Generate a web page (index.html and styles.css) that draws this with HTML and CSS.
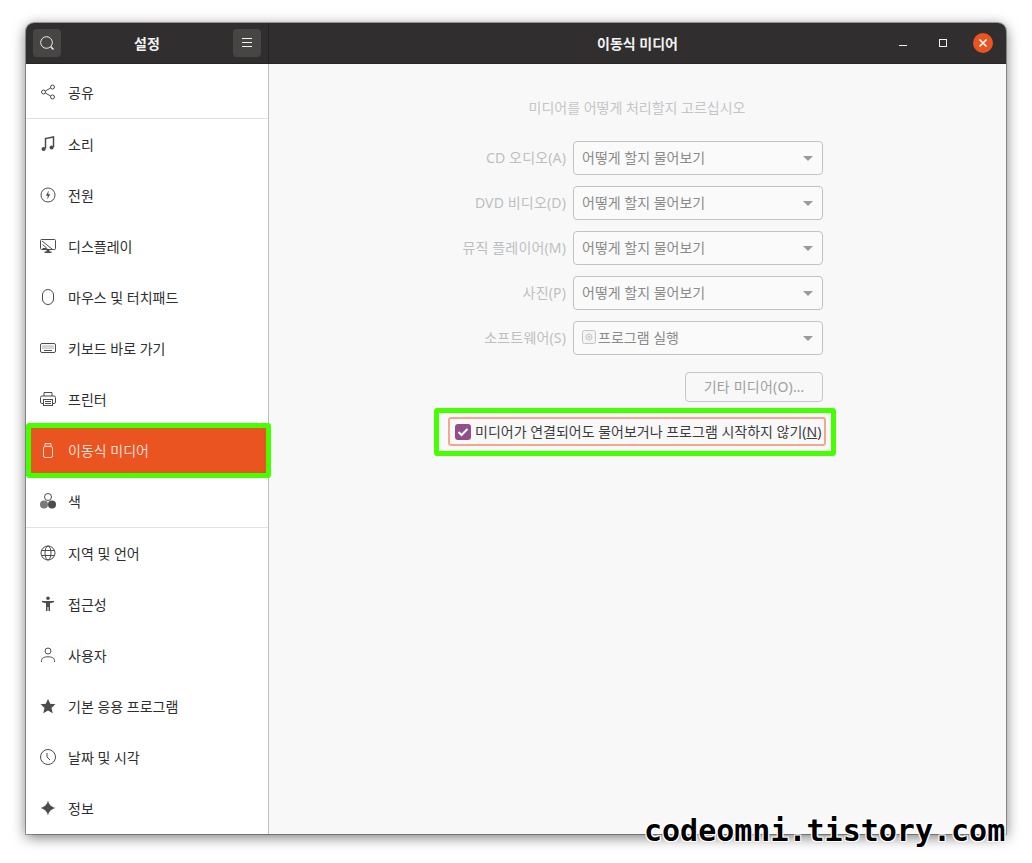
FILE: index.html
```html
<!DOCTYPE html>
<html lang="ko">
<head>
<meta charset="utf-8">
<title>설정</title>
<link rel="stylesheet" href="styles.css">
</head>
<body>
<div class="window">
  <header class="titlebar">
    <div class="titlebar-left">
      <button class="hbtn" aria-label="검색"><svg width="16" height="16" viewBox="0 0 16 16" class="hicon"><circle cx="7.500" cy="7.500" r="5.800"/><path d="M11.800 11.800l2.700 2.700" stroke-width="1.600"/></svg></button>
      <span class="title">설정</span>
      <button class="hbtn" aria-label="메뉴"><svg width="16" height="16" viewBox="0 0 16 16" class="hicon"><path d="M3 3.500h10M3 7.500h10M3 11.500h10"/></svg></button>
    </div>
    <div class="titlebar-right">
      <span class="title main-title">이동식 미디어</span>
      <div class="controls">
        <svg width="10" height="10" viewBox="0 0 10 10" class="hicon ctl-min"><path d="M1 7.500h8"/></svg>
        <svg width="10" height="10" viewBox="0 0 10 10" class="hicon"><rect x="1.500" y="1.500" width="7" height="7"/></svg>
        <span class="close"><svg width="10" height="10" viewBox="0 0 10 10" class="xicon"><path d="M1.500 1.500l7 7M8.500 1.500l-7 7"/></svg></span>
      </div>
    </div>
  </header>
  <div class="body">
    <nav class="sidebar">
      <a class="row sep"><svg class="ic" viewBox="0 0 16 16"><circle cx="3.500" cy="8" r="2"/><circle cx="12.500" cy="3" r="2"/><circle cx="12.500" cy="13" r="2"/><path d="M5.300 7l5.400-3M5.300 9l5.400 3"/></svg><span>공유</span></a>
      <a class="row"><svg class="ic" viewBox="0 0 16 16"><path d="M5.500 12.500V2.500l8-1.500v10" stroke-width="1.500"/><circle class="fill" cx="3.600" cy="13" r="2.100"/><circle class="fill" cx="11.600" cy="11.500" r="2.100"/></svg><span>소리</span></a>
      <a class="row"><svg class="ic" viewBox="0 0 16 16"><circle cx="8" cy="8" r="7"/><path class="fill" d="M8.800 3.500L5.800 8.700h2l-.6 3.800 3-5.200h-2z"/></svg><span>전원</span></a>
      <a class="row"><svg class="ic" viewBox="0 0 16 16"><rect x="0.500" y="1.500" width="15" height="10" rx="1"/><path d="M2 3l10 8M2.500 6.500l5 4.500M2.500 10.500h4"/><path class="fill" d="M6.500 12h3v1.500h2V15h-7v-1.500h2z"/></svg><span>디스플레이</span></a>
      <a class="row"><svg class="ic" viewBox="0 0 16 16"><rect x="2.500" y="0.500" width="11" height="15" rx="5.500"/></svg><span>마우스 및 터치패드</span></a>
      <a class="row"><svg class="ic" viewBox="0 0 16 16"><rect x="0.500" y="3.500" width="15" height="9" rx="1.500"/><path d="M2.500 6h11M2.500 8h11" stroke-dasharray="1 1"/><path d="M4 10.500h8"/></svg><span>키보드 바로 가기</span></a>
      <a class="row"><svg class="ic" viewBox="0 0 16 16"><path d="M4 5V1.500h8V5"/><path d="M3.500 12.500H2A1.500 1.500 0 0 1 .5 11V6.500A1.500 1.500 0 0 1 2 5h12a1.500 1.500 0 0 1 1.500 1.500V11a1.500 1.500 0 0 1-1.500 1.500h-1.500"/><rect x="3.500" y="8.500" width="9" height="6"/><path d="M5 10.500h6M5 12.500h6"/></svg><span>프린터</span></a>
      <a class="row active"><svg class="ic" viewBox="0 0 16 16"><rect x="3.500" y="4.500" width="9" height="11" rx="1.500"/><path d="M5 4.500V1.500h6v3M6.500 3h.8M8.700 3h.8"/></svg><span>이동식 미디어</span></a>
      <a class="row sep"><svg class="ic" viewBox="0 0 16 16"><circle cx="8" cy="4" r="3.500"/><circle class="fill soft" cx="4" cy="11.500" r="4"/><circle class="fill" cx="12" cy="11.500" r="4"/></svg><span>색</span></a>
      <a class="row"><svg class="ic" viewBox="0 0 16 16"><circle cx="8" cy="8" r="7"/><ellipse cx="8" cy="8" rx="3" ry="7"/><path d="M1.500 5.500h13M1.500 10.500h13"/></svg><span>지역 및 언어</span></a>
      <a class="row"><svg class="ic" viewBox="0 0 16 16"><circle class="fill" cx="8" cy="2.300" r="1.800"/><path class="fill" d="M2 5h12v1.300l-4 1V15H8.500v-4h-1v4H6V7.300l-4-1z"/></svg><span>접근성</span></a>
      <a class="row"><svg class="ic" viewBox="0 0 16 16"><circle cx="8" cy="4" r="3"/><path d="M1.500 15v-1.500C1.500 11 4 9.800 8 9.800s6.500 1.200 6.500 3.700V15"/></svg><span>사용자</span></a>
      <a class="row"><svg class="ic" viewBox="0 0 16 16"><path class="fill" d="M8 .7l2.200 5 5.300.5-4 3.600 1.200 5.400L8 12.400l-4.700 2.800 1.200-5.400-4-3.600 5.300-.5z"/></svg><span>기본 응용 프로그램</span></a>
      <a class="row"><svg class="ic" viewBox="0 0 16 16"><circle cx="8" cy="8" r="7.500"/><path d="M7 4v4l3 3"/></svg><span>날짜 및 시각</span></a>
      <a class="row"><svg class="ic" viewBox="0 0 16 16"><path class="fill" d="M8 .5c1 4.300 2.800 6 7.500 7.500-4.700 1.500-6.500 3.200-7.500 7.500C7 11.200 5.200 9.500.5 8 5.200 6.500 7 4.800 8 .5z"/></svg><span>정보</span></a>
    </nav>
    <main class="pane">
      <div class="form">
        <p class="heading">미디어를 어떻게 처리할지 고르십시오</p>
        <div class="grid">
          <label class="lbl">CD 오디오(A)</label><div class="combo"><span>어떻게 할지 물어보기</span><i class="arrow"></i></div>
          <label class="lbl">DVD 비디오(D)</label><div class="combo"><span>어떻게 할지 물어보기</span><i class="arrow"></i></div>
          <label class="lbl">뮤직 플레이어(M)</label><div class="combo"><span>어떻게 할지 물어보기</span><i class="arrow"></i></div>
          <label class="lbl">사진(P)</label><div class="combo"><span>어떻게 할지 물어보기</span><i class="arrow"></i></div>
          <label class="lbl">소프트웨어(S)</label><div class="combo"><span class="with-icon"><svg class="appicon" width="14" height="14" viewBox="0 0 14 14"><rect x="0.500" y="0.500" width="13" height="13" rx="2"/><circle cx="7" cy="7" r="3"/><circle cx="7" cy="7" r="1"/></svg>프로그램 실행</span><i class="arrow"></i></div>
        </div>
        <div class="btn-row"><button class="btn"><span class="btn-text">기타 미디어(O)…</span></button></div>
        <div class="never"><span class="check"><svg width="16" height="16" viewBox="0 0 16 16"><path d="M3.500 8l3 3 6-6"/></svg></span><span class="never-text">미디어가 연결되어도 물어보거나 프로그램 시작하지 않기(<u>N</u>)</span></div>
      </div>
    </main>
  </div>
</div>
<div class="mark mark-side"></div>
<div class="mark mark-check"></div>
<div class="watermark">codeomni.tistory.com</div>
</body>
</html>
```

FILE: styles.css
```css
* { box-sizing: border-box; }
html, body { margin: 0; height: 100%; }
body {
  background: #fff;
  font-family: "Noto Sans", "Noto Sans CJK KR", sans-serif;
  font-size: 14px;
  overflow: hidden;
  padding: 23px 26px 0;
}
.window {
  width: 980px;
  height: 811px;
  border-radius: 8px 8px 0 0;
  box-shadow: 0 3px 14px rgba(0,0,0,.55), 0 0 0 1px rgba(0,0,0,.3);
  display: flex;
  flex-direction: column;
  overflow: hidden;
  background: #f8f8f8;
}
.titlebar {
  height: 41px;
  flex: none;
  display: flex;
  background: #302e2e;
  color: #fff;
  border-bottom: 1px solid #262424;
}
.titlebar-left {
  width: 243px;
  flex: none;
  display: flex;
  align-items: center;
  justify-content: space-between;
  padding: 0 7px;
  border-right: 1px solid #222;
}
.titlebar-right {
  flex: 1;
  position: relative;
  display: flex;
  align-items: center;
  justify-content: center;
}
.title { font-weight: 700; font-size: 14px; color: #f2f2f2; }
.hbtn {
  width: 28px;
  height: 28px;
  padding: 0;
  border: 0;
  border-radius: 4px;
  background: #484644;
  display: flex;
  align-items: center;
  justify-content: center;
}
.hicon { fill: none; stroke: #f0f0f0; stroke-width: 1; }
.controls {
  position: absolute;
  right: 13px;
  top: 10px;
  display: flex;
  align-items: center;
  gap: 25px;
}
.ctl-min { margin-right: 5px; }
.close {
  width: 20px;
  height: 20px;
  border-radius: 50%;
  background: #e95420;
  display: flex;
  align-items: center;
  justify-content: center;
}
.xicon { fill: none; stroke: #fff; stroke-width: 1.6; }
.body { flex: 1; display: flex; min-height: 0; }
.sidebar {
  width: 243px;
  flex: none;
  background: #fff;
  border-right: 1px solid #bdbdbd;
  display: flex;
  flex-direction: column;
  padding-top: 3px;
}
.row {
  height: 51px;
  flex: none;
  display: flex;
  align-items: center;
  gap: 12px;
  padding-left: 14px;
  color: #2e2e2e;
}
.row span { margin-top: -2px; }
.row.sep { border-bottom: 1px solid #e2e2e2; height: 52px; }
.row.active { background: #e95420; color: #fbdcd0; }
.ic {
  width: 16px;
  height: 16px;
  flex: none;
  fill: none;
  stroke: #4c4c4c;
  stroke-width: 1;
  margin-top: -2px;
}
.ic .fill { fill: #4c4c4c; stroke: none; }
.ic .soft { fill: #7a7a7a; }
.active .ic { stroke: #fbd5c6; }
.pane {
  flex: 1;
  display: flex;
  justify-content: center;
  padding-right: 1px;
  background: #f8f8f8;
}
.form { width: 378px; display: flex; flex-direction: column; padding-top: 34px; }
.heading {
  margin: 0 0 23px;
  text-align: center;
  line-height: 20px;
  color: #c3c6c8;
}
.grid {
  display: grid;
  grid-template-columns: 118px 250px;
  column-gap: 7px;
  row-gap: 11px;
  align-items: center;
}
.lbl {
  text-align: right;
  color: #bcbfc1;
  white-space: nowrap;
  letter-spacing: .15px;
  margin-top: -2px;
}
.combo {
  height: 34px;
  border: 1px solid #c2c2c2;
  border-radius: 4px;
  background: #fafafa;
  display: flex;
  align-items: center;
  justify-content: space-between;
  padding: 0 9px 0 8px;
  color: #8a8a8a;
}
.combo > span { margin-top: -2px; }
.with-icon { display: flex; align-items: center; gap: 2px; }
.appicon { fill: #f4f4f4; stroke: #c4c4c4; stroke-width: 1; }
.arrow {
  width: 0;
  height: 0;
  border-left: 5.500px solid transparent;
  border-right: 5.500px solid transparent;
  border-top: 5.500px solid #9a9a9a;
}
.btn-row { display: flex; justify-content: flex-end; padding: 17px 3px 0 0; }
.btn {
  width: 138px;
  height: 30px;
  padding: 0 0 2px;
  border: 1px solid #c6c6c6;
  border-radius: 4px;
  background: #f8f8f8;
  font: inherit;
  color: #a0a0a0;
}
.btn-text { letter-spacing: .2px; }
.never {
  margin-top: 15px;
  height: 29px;
  border: 2px solid #f2a88f;
  border-radius: 3px;
  display: flex;
  align-items: center;
  gap: 4px;
  padding-left: 5px;
  color: #3c3c3c;
  white-space: nowrap;
}
.never-text { margin-top: -2px; }
.check {
  width: 16px;
  height: 16px;
  flex: none;
  border-radius: 3px;
  background: #924d8b;
  display: flex;
}
.check svg { fill: none; stroke: #fff; stroke-width: 2; }
.mark { position: absolute; border: 5px solid #46ff00; border-radius: 3px; pointer-events: none; }
.mark-side { left: 26px; top: 423px; width: 245px; height: 55px; }
.mark-check { left: 434px; top: 408px; width: 402px; height: 48px; }
.watermark {
  position: absolute;
  left: 644px;
  top: 813px;
  font-family: "DejaVu Sans Mono", monospace;
  font-weight: 700;
  font-size: 30px;
  line-height: 36px;
  color: #000;
  text-shadow: 1px 1px 0 #fff, -1px -1px 0 #fff, 1px -1px 0 #fff, -1px 1px 0 #fff;
  white-space: nowrap;
}
```
